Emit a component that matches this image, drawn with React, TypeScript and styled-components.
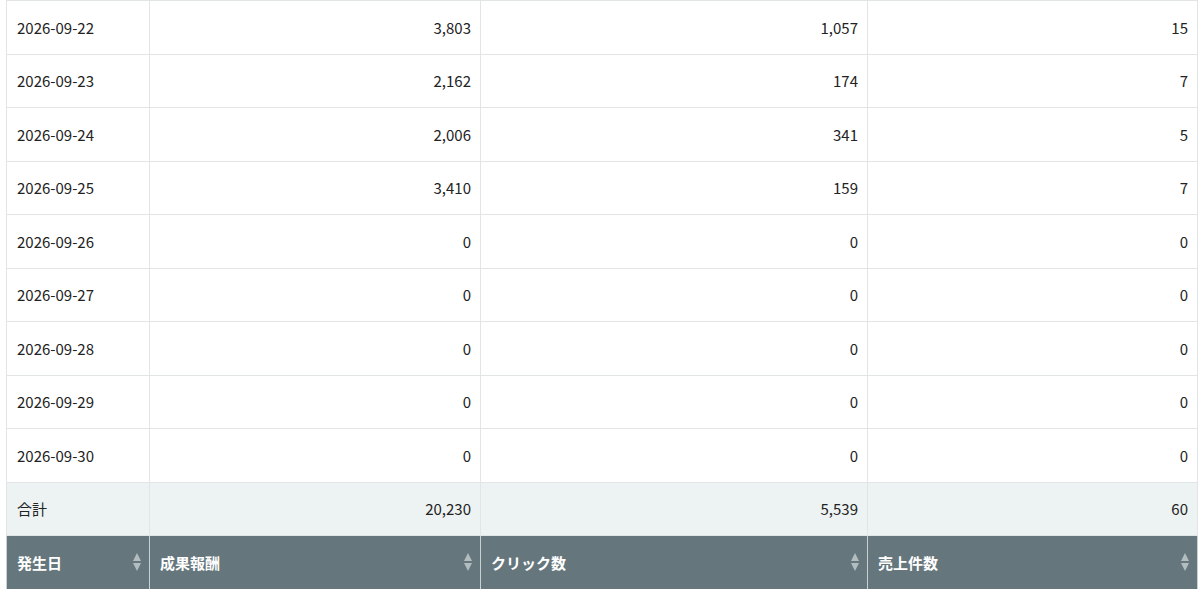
import React from "react";
import styled, { createGlobalStyle } from "styled-components";

const GlobalStyle = createGlobalStyle`
  body {
    margin: 0;
    background: #fff;
    font-family: "Noto Sans CJK JP", "Noto Sans", sans-serif;
  }
`;

const Wrapper = styled.div`
  padding: 0 3px 0 6px;
`;

const Table = styled.table`
  width: 1191px;
  border-collapse: collapse;
  table-layout: fixed;
  font-size: 15px;
  color: #222;
`;

const Row = styled.tr<{ $total?: boolean }>`
  height: 53.5px;
  background: ${(p) => (p.$total ? "#edf2f2" : "#fff")};
`;

const Cell = styled.td<{ $num?: boolean }>`
  border: 1px solid #e2e5e5;
  padding: 0 9px 0 10px;
  text-align: ${(p) => (p.$num ? "right" : "left")};
  vertical-align: middle;
  white-space: nowrap;
`;

const HeadRow = styled.tr`
  height: 53px;
  background: #65767c;
`;

const HeadCell = styled.th`
  position: relative;
  border-left: 1px solid #c9d0d2;
  border-right: 1px solid #c9d0d2;
  padding: 0 30px 0 10px;
  text-align: left;
  color: #fff;
  font-weight: 700;
  font-size: 15px;
  cursor: pointer;
`;

const SortIcon = styled.span`
  position: absolute;
  right: 8px;
  top: 50%;
  transform: translateY(-50%);
  display: flex;
  flex-direction: column;
  gap: 2px;

  &::before,
  &::after {
    content: "";
    display: block;
    width: 0;
    height: 0;
    border-left: 4.5px solid transparent;
    border-right: 4.5px solid transparent;
  }
  &::before {
    border-bottom: 8px solid #b3bcbf;
  }
  &::after {
    border-top: 8px solid #b3bcbf;
  }
`;

interface DayStat {
  date: string;
  reward: number;
  clicks: number;
  sales: number;
}

const rows: DayStat[] = [
  { date: "2026-09-22", reward: 3803, clicks: 1057, sales: 15 },
  { date: "2026-09-23", reward: 2162, clicks: 174, sales: 7 },
  { date: "2026-09-24", reward: 2006, clicks: 341, sales: 5 },
  { date: "2026-09-25", reward: 3410, clicks: 159, sales: 7 },
  { date: "2026-09-26", reward: 0, clicks: 0, sales: 0 },
  { date: "2026-09-27", reward: 0, clicks: 0, sales: 0 },
  { date: "2026-09-28", reward: 0, clicks: 0, sales: 0 },
  { date: "2026-09-29", reward: 0, clicks: 0, sales: 0 },
  { date: "2026-09-30", reward: 0, clicks: 0, sales: 0 },
];

const fmt = (n: number) => n.toLocaleString("en-US");

const headers = ["発生日", "成果報酬", "クリック数", "売上件数"];

function App() {
  return (
    <Wrapper>
      <GlobalStyle />
      <Table>
        <colgroup>
          <col style={{ width: 143 }} />
          <col style={{ width: 331 }} />
          <col style={{ width: 387 }} />
          <col style={{ width: 330 }} />
        </colgroup>
        <tbody>
          {rows.map((r) => (
            <Row key={r.date}>
              <Cell>{r.date}</Cell>
              <Cell $num>{fmt(r.reward)}</Cell>
              <Cell $num>{fmt(r.clicks)}</Cell>
              <Cell $num>{fmt(r.sales)}</Cell>
            </Row>
          ))}
          <Row $total>
            <Cell>合計</Cell>
            <Cell $num>20,230</Cell>
            <Cell $num>5,539</Cell>
            <Cell $num>60</Cell>
          </Row>
        </tbody>
        <tfoot>
          <HeadRow>
            {headers.map((h) => (
              <HeadCell key={h}>
                {h}
                <SortIcon />
              </HeadCell>
            ))}
          </HeadRow>
        </tfoot>
      </Table>
    </Wrapper>
  );
}

export default App;
